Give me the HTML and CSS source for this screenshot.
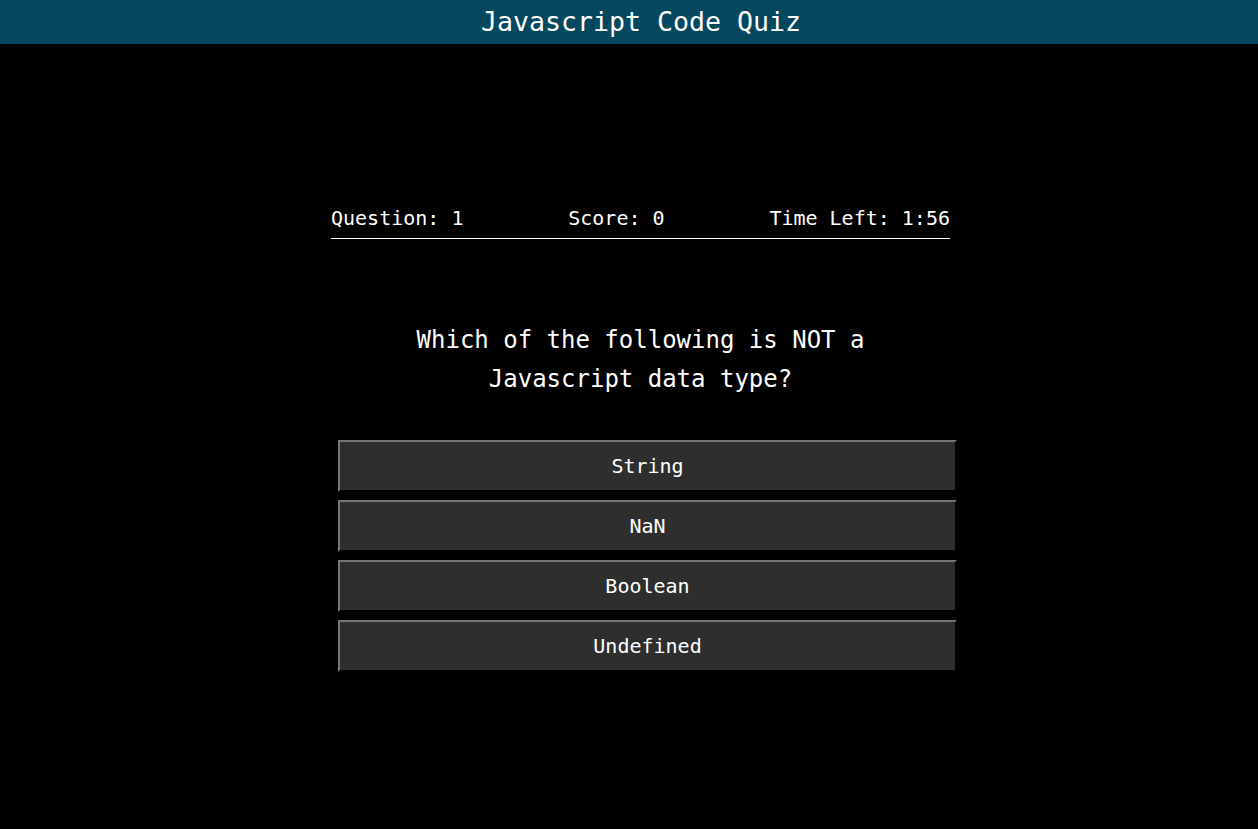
FILE: index.html
```html
<!DOCTYPE html>
<html>
<head>
<meta charset="utf-8">
<title>Javascript Code Quiz</title>
<link rel="stylesheet" href="styles.css">
</head>
<body>
<header class="topbar">
  <h1 class="title">Javascript Code Quiz</h1>
</header>
<div class="page">
  <main class="quiz">
    <div class="stats">
      <span>Question: 1</span>
      <span>Score: 0</span>
      <span>Time Left: 1:56</span>
    </div>
    <p class="question">Which of the following is NOT a Javascript data type?</p>
    <div class="answers">
      <button class="answer">String</button>
      <button class="answer">NaN</button>
      <button class="answer">Boolean</button>
      <button class="answer">Undefined</button>
    </div>
  </main>
</div>
</body>
</html>
```
FILE: styles.css
```css
html, body {
  margin: 0;
  padding: 0;
  background: #000;
  color: #fff;
  font-family: "DejaVu Sans Mono", "Liberation Mono", monospace;
}
.topbar {
  background: #04475f;
  height: 44px;
  display: flex;
  align-items: center;
  justify-content: center;
  padding-left: 24px;
}
.title {
  margin: 0;
  font-size: 26.6px;
  font-weight: normal;
  line-height: 44px;
}
.page {
  padding-left: 23px;
}
.quiz {
  width: 619px;
  margin: 0 auto;
  padding-top: 162px;
}
.stats {
  display: flex;
  justify-content: space-between;
  font-size: 20px;
  line-height: 24px;
  padding-bottom: 8px;
  border-bottom: 1px solid #fff;
}
.question {
  width: 470px;
  margin: 82px auto 41px;
  text-align: center;
  font-size: 24px;
  line-height: 39px;
}
.answers {
  display: flex;
  flex-direction: column;
  gap: 8px;
  margin-left: 7px;
}
.answer {
  width: 619px;
  height: 52px;
  background: #2e2e2e;
  color: #fff;
  border: 2px outset #767676;
  border-right-color: #1a1a1a;
  border-bottom-color: #1a1a1a;
  font-family: "DejaVu Sans Mono", "Liberation Mono", monospace;
  font-size: 20px;
  padding: 0;
  cursor: pointer;
}
```
